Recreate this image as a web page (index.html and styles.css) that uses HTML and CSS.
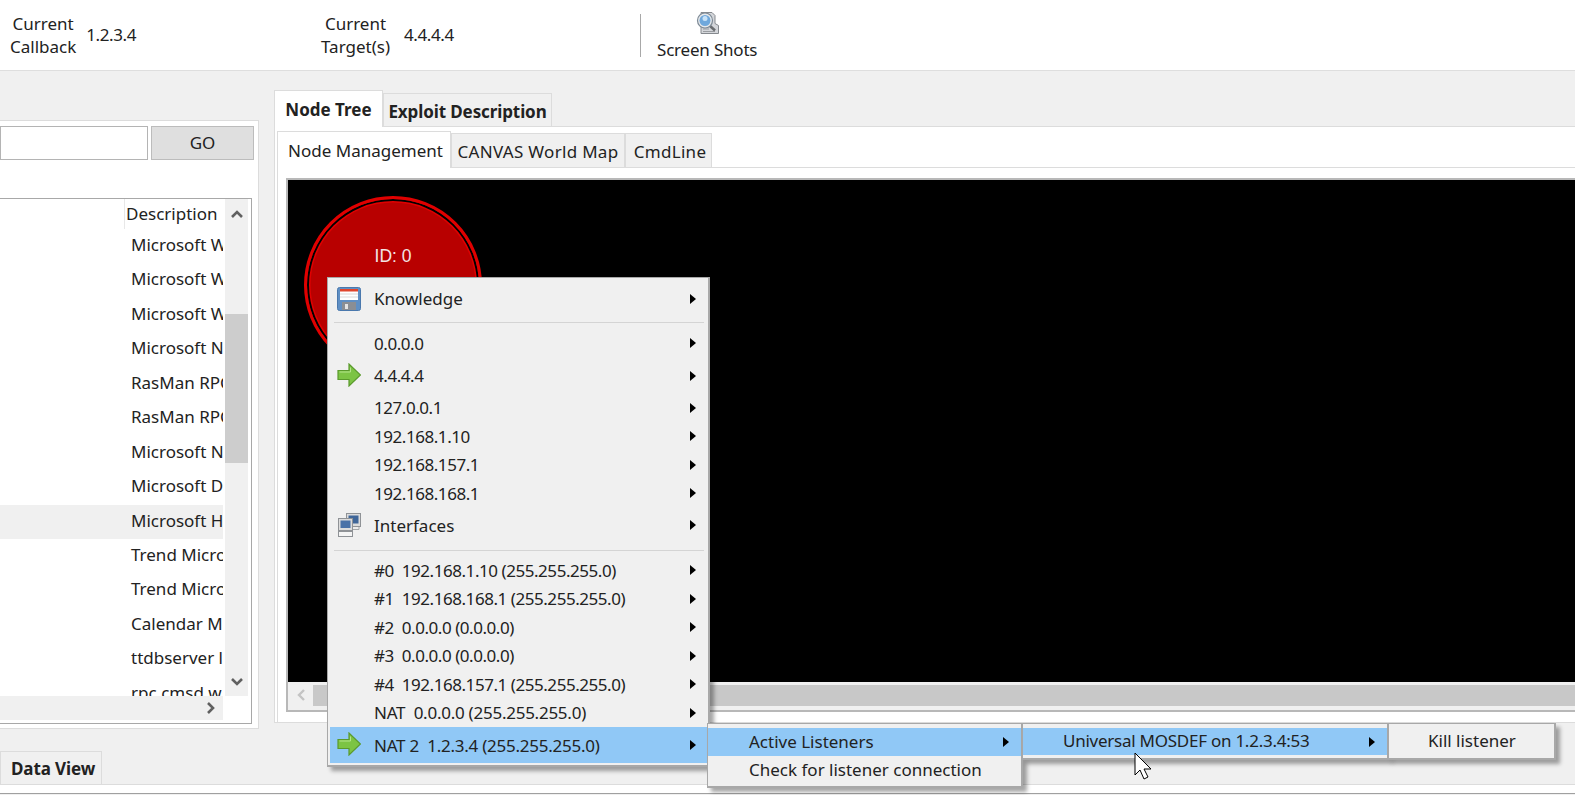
FILE: index.html
```html
<!DOCTYPE html>
<html lang="en">
<head>
    <meta charset="UTF-8">
    <meta name="viewport" content="width=device-width, initial-scale=1.0">
    <title>CANVAS</title>
    <link rel="stylesheet" href="styles.css">
</head>
<body>
    <header class="topbar">
        <div class="status status-callback">
            <div class="status-label">Current<br>Callback</div>
            <div class="status-value">1.2.3.4</div>
        </div>
        <div class="status status-target">
            <div class="status-label">Current<br>Target(s)</div>
            <div class="status-value">4.4.4.4</div>
        </div>
        <div class="toolbar-sep"></div>
        <div class="toolbar-btn">
            <svg width="24" height="24" viewBox="0 0 24 24">
                <path d="M6 1.5h11l3 3v8l3.5 2v8H6z" fill="#d4d6da" stroke="#85898e"/>
                <path d="M8 18h6M8 20.5h12" stroke="#9a9da1"/>
                <path d="M14.5 14.5l5.5 5" stroke="#6a6d70" stroke-width="2.6"/>
                <circle cx="10" cy="9.5" r="7.5" fill="#e6e8ea" stroke="#7d8a96" stroke-width="1.2"/>
                <circle cx="10" cy="9.5" r="5.5" fill="#6fa8dc"/>
                <circle cx="10" cy="7.5" r="2.5" fill="#c8e2f7"/>
            </svg>
            <span>Screen Shots</span>
        </div>
    </header>

    <main class="main">
        <section class="left">
            <div class="search-row">
                <div class="search-input"></div>
                <div class="go-btn">GO</div>
            </div>
            <div class="list">
                <div class="list-cols">
                    <div class="list-body">
                        <div class="list-head"><span>Description</span></div>
                        <div class="list-row">Microsoft W</div>
                        <div class="list-row">Microsoft W</div>
                        <div class="list-row">Microsoft W</div>
                        <div class="list-row">Microsoft N</div>
                        <div class="list-row">RasMan RPC</div>
                        <div class="list-row">RasMan RPC</div>
                        <div class="list-row">Microsoft N</div>
                        <div class="list-row">Microsoft D</div>
                        <div class="list-row list-row-on">Microsoft H</div>
                        <div class="list-row">Trend Micro</div>
                        <div class="list-row">Trend Micro</div>
                        <div class="list-row">Calendar M</div>
                        <div class="list-row">ttdbserver li</div>
                        <div class="list-row">rpc.cmsd w</div>
                    </div>
                    <div class="vscroll">
                        <svg class="scroll-arrow" width="14" height="10" viewBox="0 0 14 10"><path d="M2 8l5-5 5 5" fill="none" stroke="#606060" stroke-width="2.6"/></svg>
                        <div class="vscroll-thumb"></div>
                        <svg class="scroll-arrow scroll-arrow-down" width="14" height="10" viewBox="0 0 14 10"><path d="M2 2l5 5 5-5" fill="none" stroke="#606060" stroke-width="2.6"/></svg>
                    </div>
                </div>
                <div class="hscroll">
                    <svg width="10" height="14" viewBox="0 0 10 14"><path d="M2 2l5 5-5 5" fill="none" stroke="#606060" stroke-width="2.6"/></svg>
                </div>
            </div>
        </section>

        <section class="right">
            <div class="tabs">
                <div class="tab tab-bold tab-on tab-tree">Node Tree</div>
                <div class="tab tab-bold tab-exploit">Exploit Description</div>
            </div>
            <div class="tab-page">
                <div class="tabs">
                    <div class="tab tab-on tab-mgmt">Node Management</div>
                    <div class="tab tab-map">CANVAS World Map</div>
                    <div class="tab tab-cmd">CmdLine</div>
                </div>
                <div class="inner-page">
                    <div class="canvas-frame">
                        <div class="canvas">
                            <div class="node"><span>ID: 0</span></div>
                        </div>
                        <div class="canvas-scroll">
                            <svg width="10" height="14" viewBox="0 0 10 14"><path d="M8 2L3 7l5 5" fill="none" stroke="#c4c4c4" stroke-width="2.4"/></svg>
                            <div class="canvas-thumb"></div>
                        </div>
                    </div>
                </div>
            </div>
        </section>
    </main>

    <footer class="bottom-tabs">
        <div class="data-tab">Data View</div>
        <div class="status-strip"></div>
    </footer>

    <!-- context menu -->
    <div class="menu menu-main">
        <div class="item item-icon item-first">
            <svg class="ico" width="24" height="24" viewBox="0 0 24 24">
                <rect x="0.5" y="0.5" width="23" height="23" rx="2" fill="#5f8fc4" stroke="#4a78ad"/>
                <rect x="3" y="2" width="18" height="11" fill="#fff"/>
                <rect x="3" y="2" width="18" height="2.5" fill="#e0452c"/>
                <path d="M3 7h18M3 10h18" stroke="#d8d8d8"/>
                <rect x="5" y="15" width="14" height="8" fill="#8a8e94"/>
                <rect x="8" y="17" width="3" height="5" fill="#e4e4e4"/>
            </svg>
            <span class="item-text">Knowledge</span>
            <i class="caret"></i>
        </div>
        <div class="menu-sep menu-sep-a"></div>
        <div class="item"><span class="item-text num">0.0.0.0</span><i class="caret"></i></div>
        <div class="item item-icon item-tall">
            <svg class="ico" width="24" height="24" viewBox="0 0 24 24"><path d="M1 7.5h11V1l11.5 11L12 23v-6.5H1z" fill="#7cc444" stroke="#5a9a2c" stroke-width="1.2"/><path d="M2.5 9h11V4.5" fill="none" stroke="#b4e48c"/></svg>
            <span class="item-text num">4.4.4.4</span>
            <i class="caret"></i>
        </div>
        <div class="item"><span class="item-text num">127.0.0.1</span><i class="caret"></i></div>
        <div class="item"><span class="item-text num">192.168.1.10</span><i class="caret"></i></div>
        <div class="item"><span class="item-text num">192.168.157.1</span><i class="caret"></i></div>
        <div class="item"><span class="item-text num">192.168.168.1</span><i class="caret"></i></div>
        <div class="item item-icon">
            <svg class="ico" width="24" height="24" viewBox="0 0 24 24">
                <path d="M11 13.5h11v3H11z" fill="#ececec" stroke="#a4a6a8"/>
                <rect x="9.5" y="0.5" width="14" height="13" fill="#dcdcdc" stroke="#8f9296"/>
                <rect x="11.5" y="2.5" width="10" height="8" fill="#3f6699"/>
                <rect x="1.5" y="5.5" width="14" height="12" fill="#dcdcdc" stroke="#8f9296"/>
                <rect x="3.5" y="7.5" width="10" height="7.5" fill="#4a72a8"/>
                <rect x="1.5" y="18.5" width="14" height="5" fill="#f4f4f4" stroke="#8f9296"/>
            </svg>
            <span class="item-text">Interfaces</span>
            <i class="caret"></i>
        </div>
        <div class="menu-sep menu-sep-b"></div>
        <div class="item"><span class="item-text num">#0&nbsp; 192.168.1.10 (255.255.255.0)</span><i class="caret"></i></div>
        <div class="item"><span class="item-text num">#1&nbsp; 192.168.168.1 (255.255.255.0)</span><i class="caret"></i></div>
        <div class="item"><span class="item-text num">#2&nbsp; 0.0.0.0 (0.0.0.0)</span><i class="caret"></i></div>
        <div class="item"><span class="item-text num">#3&nbsp; 0.0.0.0 (0.0.0.0)</span><i class="caret"></i></div>
        <div class="item"><span class="item-text num">#4&nbsp; 192.168.157.1 (255.255.255.0)</span><i class="caret"></i></div>
        <div class="item"><span class="item-text num-s">NAT&nbsp; 0.0.0.0 (255.255.255.0)</span><i class="caret"></i></div>
        <div class="item item-icon item-on">
            <svg class="ico" width="24" height="24" viewBox="0 0 24 24"><path d="M1 7.5h11V1l11.5 11L12 23v-6.5H1z" fill="#7cc444" stroke="#5a9a2c" stroke-width="1.2"/><path d="M2.5 9h11V4.5" fill="none" stroke="#b4e48c"/></svg>
            <span class="item-text num-s">NAT 2&nbsp; 1.2.3.4 (255.255.255.0)</span>
            <i class="caret"></i>
        </div>
    </div>

    <div class="menu menu-sub1">
        <div class="item item-on"><span class="item-text">Active Listeners</span><i class="caret"></i></div>
        <div class="item"><span class="item-text">Check for listener connection</span></div>
    </div>

    <div class="menu menu-sub2">
        <div class="item item-on"><span class="item-text num-s">Universal MOSDEF on 1.2.3.4:53</span><i class="caret"></i></div>
    </div>

    <div class="menu menu-sub3">
        <div class="item"><span class="item-text">Kill listener</span></div>
    </div>

    <svg class="cursor" width="20" height="28" viewBox="0 0 20 28">
        <path d="M1 1v22l5-5 4 9 4-2-4-8h7z" fill="#fff" stroke="#000"/>
    </svg>
</body>
</html>
```

FILE: styles.css
```css
/* Reset and Basic Styles */
* {
    box-sizing: border-box;
    margin: 0;
    padding: 0;
}

body {
    font-family: 'Noto Sans', sans-serif;
    font-size: 17px;
    width: 1575px;
    height: 795px;
    overflow: hidden;
    position: relative;
    background: #f0f0f0;
    color: #222;
}

/* Top bar */
.topbar {
    height: 71px;
    background: #fff;
    border-bottom: 1px solid #dedede;
    display: flex;
    align-items: flex-start;
}

.status {
    display: flex;
    align-items: center;
    height: 70px;
    padding-bottom: 1px;
}

.status-callback {
    width: 318px;
    padding-left: 10px;
    gap: 10px;
}

.status-target {
    width: 322px;
    padding-left: 3px;
    gap: 14px;
}

.status-label {
    text-align: center;
    line-height: 23px;
}

.status-value {
    letter-spacing: -0.4px;
}

.toolbar-sep {
    width: 1px;
    height: 43px;
    margin-top: 14px;
    background: #a8a8a8;
}

.toolbar-btn {
    margin-left: 16px;
    padding-top: 11px;
    display: flex;
    flex-direction: column;
    align-items: center;
    gap: 3px;
    line-height: 23px;
    letter-spacing: -0.2px;
}

/* Main area */
.main {
    display: flex;
    height: 680px;
}

.left {
    flex: none;
    width: 260px;
    height: 609px;
    margin-top: 49px;
    margin-left: -1px;
    padding: 5px 6px 6px 0;
    background: #fff;
    border: 1px solid #dcdcdc;
}

.search-row {
    display: flex;
    gap: 3px;
    width: 255px;
}

.search-input {
    flex: none;
    width: 148px;
    height: 34px;
    background: #fff;
    border: 1px solid #b4b4b4;
}

.go-btn {
    flex: none;
    width: 103px;
    height: 34px;
    background: #dfdfdf;
    border: 1px solid #bcbcbc;
    text-align: center;
    line-height: 32px;
}

.list {
    margin-top: 38px;
    height: 526px;
    border: 1px solid #a8a8a8;
    border-left: none;
    background: #fff;
}

.list-cols {
    display: flex;
    height: 497px;
}

.list-body {
    width: 223px;
    overflow: hidden;
}

.list-head {
    height: 30px;
    padding-left: 124px;
}

.list-head span {
    display: block;
    height: 30px;
    padding-left: 1px;
    line-height: 30px;
    border-left: 1px solid #e8e8e8;
}

.list-row {
    height: 34.45px;
    padding-left: 131px;
    line-height: 32px;
    white-space: nowrap;
    overflow: hidden;
}

.list-row-on {
    background: #f0f0f0;
}

.vscroll {
    width: 23px;
    margin-left: 2px;
    background: #f0f0f0;
    display: flex;
    flex-direction: column;
    align-items: center;
    padding-top: 10px;
}

.vscroll-thumb {
    width: 100%;
    height: 149px;
    margin-top: 95px;
    background: #cdcdcd;
}

.scroll-arrow-down {
    margin-top: auto;
    margin-bottom: 9px;
}

.hscroll {
    width: 223px;
    height: 24px;
    background: #f0f0f0;
    display: flex;
    align-items: center;
    justify-content: flex-end;
    padding-right: 7px;
}

/* Right tabs */
.right {
    flex: 1;
    min-width: 0;
    margin-left: 15px;
    padding-top: 19px;
}

.tabs {
    display: flex;
    align-items: flex-end;
}

.tab {
    border: 1px solid #dcdcdc;
    border-bottom: none;
    background: #f0f0f0;
    text-align: center;
    white-space: nowrap;
}

.tab-on {
    background: #fff;
    margin-bottom: -1px;
    position: relative;
    z-index: 1;
}

.tab-bold {
    font-weight: 700;
}

.tab-tree {
    width: 109px;
    height: 37px;
    line-height: 38px;
}

.tab-exploit {
    width: 169px;
    height: 33px;
    line-height: 35px;
    letter-spacing: -0.1px;
}

.tab-page {
    width: 1310px;
    height: 597px;
    padding: 4px 0 0 2px;
    background: #fff;
    border: 1px solid #dcdcdc;
}

.tab-mgmt {
    width: 174px;
    height: 37px;
    padding-left: 3px;
    line-height: 38px;
}

.tab-map {
    width: 174px;
    height: 34px;
    line-height: 36px;
    letter-spacing: 0.3px;
}

.tab-cmd {
    width: 87px;
    height: 34px;
    padding-left: 3px;
    line-height: 36px;
    letter-spacing: 0.3px;
}

.inner-page {
    height: 556px;
    padding: 10px 0 0 8px;
    background: #fff;
    border: 1px solid #dcdcdc;
}

.canvas-frame {
    width: 1320px;
    height: 534px;
    border: 2px solid #b8b8b8;
    background: #f0f0f0;
}

.canvas {
    height: 502px;
    background: #000;
    position: relative;
    overflow: hidden;
}

/* node sits on a free canvas */
.node {
    position: absolute;
    left: 16px;
    top: 16px;
    width: 178px;
    height: 178px;
    border-radius: 50%;
    background: #b80000;
    border: 3px solid #e00000;
    box-shadow: inset 0 0 0 2px #000, inset 0 0 0 3.5px #e00000;
    color: #f2e4e4;
    text-align: center;
    font-family: 'Liberation Sans', sans-serif;
    font-size: 17.5px;
    padding-top: 47px;
}

.canvas-scroll {
    height: 25px;
    display: flex;
    align-items: flex-start;
    padding-top: 3px;
}

.canvas-scroll svg {
    margin: 3px 8px 0 8px;
}

.canvas-thumb {
    flex: 1;
    height: 21px;
    margin-left: -1px;
    background: #c8c8c8;
}

/* Bottom tab */
.bottom-tabs {
    height: 43px;
    display: flex;
    flex-direction: column;
}

.data-tab {
    width: 102px;
    height: 33px;
    padding-left: 10px;
    font-weight: 700;
    line-height: 33px;
    letter-spacing: -0.1px;
    background: #f0f0f0;
    border: 1px solid #dcdcdc;
    border-bottom: none;
}

.status-strip {
    flex: 1;
    background: #fff;
    border-top: 1px solid #dcdcdc;
    border-bottom: 1px solid #a0a0a0;
}

/* Context menus */
.menu {
    position: absolute;
    background: #f0f0f0;
    border: 2px solid #a8a8a8;
    border-width: 1px 2px 2px 1px;
    box-shadow: 4px 4px 4px rgba(0, 0, 0, 0.35);
    padding: 4px 0;
}

.menu-main {
    left: 327px;
    top: 277px;
    width: 383px;
    height: 490px;
}

.menu-sub1 {
    left: 707px;
    top: 723px;
    width: 316px;
    height: 65px;
}

.menu-sub2 {
    left: 1022px;
    top: 723px;
    width: 367px;
    height: 37px;
}

.menu-sub3 {
    left: 1388px;
    top: 723px;
    width: 168px;
    height: 37px;
}

.item {
    height: 28.5px;
    display: flex;
    align-items: center;
    padding-left: 46px;
    position: relative;
    white-space: nowrap;
}

.item-icon {
    height: 35px;
}

.item-first {
    height: 33px;
}

.item-tall {
    height: 36px;
}

.item-on {
    background: #90c8f6;
}

.num {
    letter-spacing: -0.45px;
}

.num-s {
    letter-spacing: -0.25px;
}

.menu-main .item-on {
    height: 36px;
    margin-left: 2px;
    padding-left: 44px;
}

.menu-main .item-on .ico {
    left: 7px;
}

.ico {
    position: absolute;
    left: 9px;
    top: 5px;
}

.caret {
    position: absolute;
    right: 12px;
    top: 50%;
    margin-top: -5px;
    border-left: 6px solid #000;
    border-top: 5px solid transparent;
    border-bottom: 5px solid transparent;
}

.menu-sep {
    height: 1px;
    margin-left: 6px;
    margin-right: 4px;
    background: #d4d4d4;
}

.menu-sep-a {
    margin-top: 7px;
    margin-bottom: 6px;
}

.menu-sep-b {
    margin-top: 7px;
    margin-bottom: 5.5px;
}

.menu-sub1 .item,
.menu-sub2 .item,
.menu-sub3 .item {
    padding-bottom: 2px;
}

.menu-sub1 .item {
    padding-left: 41px;
}

.menu-sub1 .item-on {
    height: 28px;
}

.menu-sub2 .item {
    padding-left: 40px;
    height: 27px;
}

.menu-sub3 .item {
    padding-left: 39px;
    height: 27px;
}

.cursor {
    position: absolute;
    left: 1134px;
    top: 752px;
}
```
